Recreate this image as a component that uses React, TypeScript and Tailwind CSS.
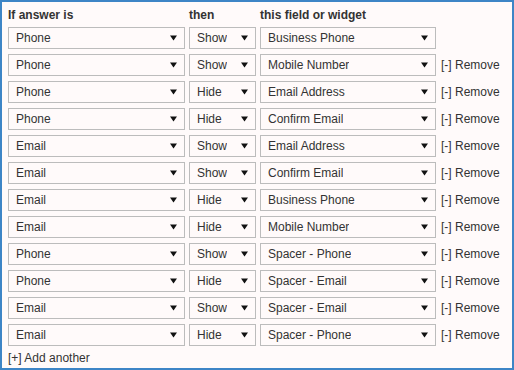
import React from 'react';

interface Rule {
  answer: string;
  action: string;
  field: string;
  removable: boolean;
}

const rules: Rule[] = [
  { answer: 'Phone', action: 'Show', field: 'Business Phone', removable: false },
  { answer: 'Phone', action: 'Show', field: 'Mobile Number', removable: true },
  { answer: 'Phone', action: 'Hide', field: 'Email Address', removable: true },
  { answer: 'Phone', action: 'Hide', field: 'Confirm Email', removable: true },
  { answer: 'Email', action: 'Show', field: 'Email Address', removable: true },
  { answer: 'Email', action: 'Show', field: 'Confirm Email', removable: true },
  { answer: 'Email', action: 'Hide', field: 'Business Phone', removable: true },
  { answer: 'Email', action: 'Hide', field: 'Mobile Number', removable: true },
  { answer: 'Phone', action: 'Show', field: 'Spacer - Phone', removable: true },
  { answer: 'Phone', action: 'Hide', field: 'Spacer - Email', removable: true },
  { answer: 'Email', action: 'Show', field: 'Spacer - Email', removable: true },
  { answer: 'Email', action: 'Hide', field: 'Spacer - Phone', removable: true },
];

const Arrow = () => (
  <svg width="7" height="6" viewBox="0 0 7 6" className="shrink-0">
    <path d="M0 0.5 H7 L3.5 5.5 Z" fill="#111" />
  </svg>
);

const FakeSelect = ({ value, width }: { value: string; width: string }) => (
  <div
    className={`${width} h-[22px] border border-[#bcbcbc] bg-[#fffafa] flex items-center justify-between pl-[7px] pr-[7px]`}
  >
    <span className="truncate">{value}</span>
    <Arrow />
  </div>
);

export default function App() {
  return (
    <div
      className="w-[514px] h-[370px] border-2 border-[#3d85c6] bg-[#fffafa] text-[#333] text-[12px] leading-[14px] pt-[6px] pl-[6px]"
      style={{ fontFamily: '"Liberation Sans", Arial, sans-serif' }}
    >
      <div className="flex flex-col gap-[5px]">
        <div className="flex gap-[4px] font-bold h-[14px]">
          <div className="w-[177px]">If answer is</div>
          <div className="w-[67px]">then</div>
          <div className="w-[176px]">this field or widget</div>
        </div>
        {rules.map((r, i) => (
          <div key={i} className="flex items-center gap-[4px]">
            <FakeSelect value={r.answer} width="w-[177px]" />
            <FakeSelect value={r.action} width="w-[67px]" />
            <FakeSelect value={r.field} width="w-[176px]" />
            {r.removable && <span className="ml-[1px] cursor-pointer">[-] Remove</span>}
          </div>
        ))}
      </div>
      <div className="mt-[5px] cursor-pointer">[+] Add another</div>
    </div>
  );
}
